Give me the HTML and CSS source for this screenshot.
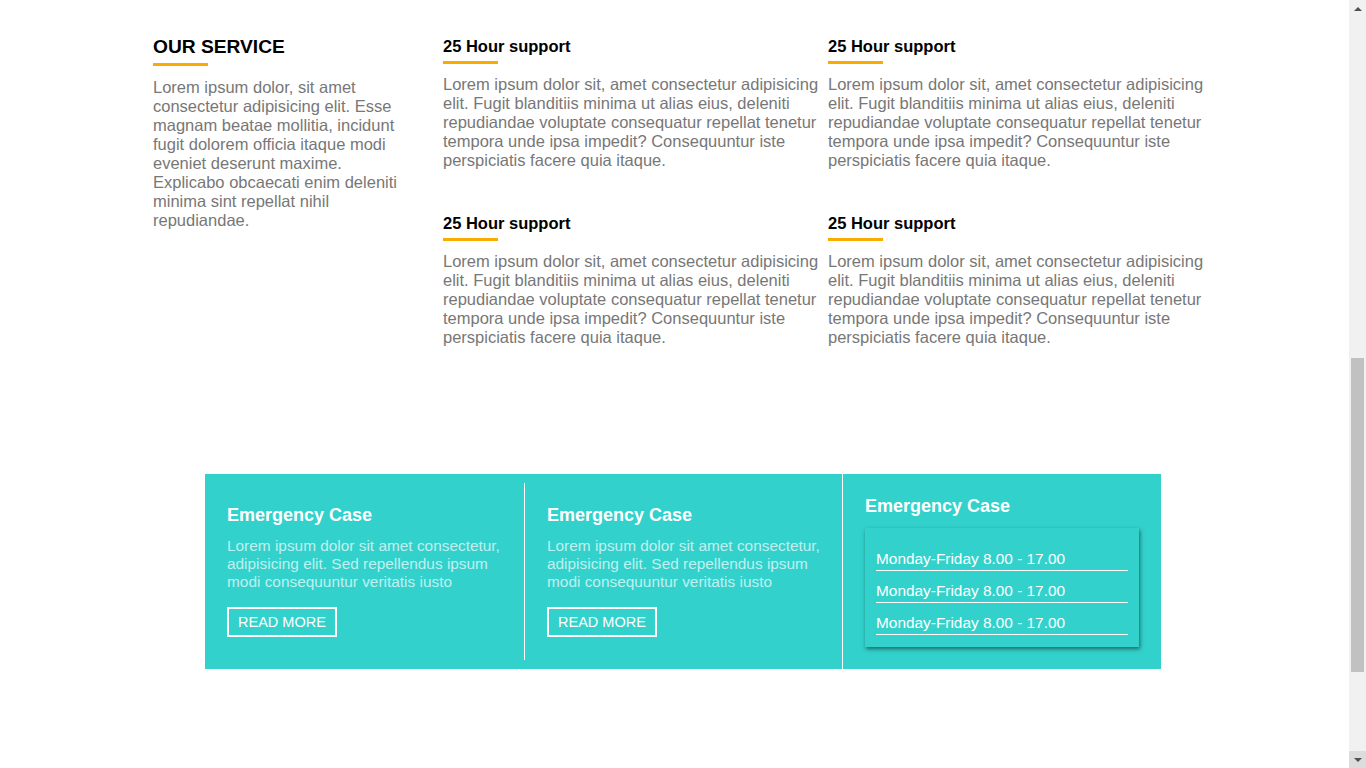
FILE: index.html
```html
<!DOCTYPE html>
<html lang="en">
<head>
<meta charset="utf-8">
<title>Our Service</title>
<link rel="stylesheet" href="styles.css">
</head>
<body>
<div class="page">
  <section class="services">
    <div class="intro">
      <h2 class="intro-title">OUR SERVICE</h2>
      <div class="bar bar-intro"></div>
      <p class="intro-text">Lorem ipsum dolor, sit amet consectetur adipisicing elit. Esse magnam beatae mollitia, incidunt fugit dolorem officia itaque modi eveniet deserunt maxime. Explicabo obcaecati enim deleniti minima sint repellat nihil repudiandae.</p>
    </div>
    <div class="service">
      <h3 class="service-title">25 Hour support</h3>
      <div class="bar"></div>
      <p class="service-text">Lorem ipsum dolor sit, amet consectetur adipisicing elit. Fugit blanditiis minima ut alias eius, deleniti repudiandae voluptate consequatur repellat tenetur tempora unde ipsa impedit? Consequuntur iste perspiciatis facere quia itaque.</p>
    </div>
    <div class="service">
      <h3 class="service-title">25 Hour support</h3>
      <div class="bar"></div>
      <p class="service-text">Lorem ipsum dolor sit, amet consectetur adipisicing elit. Fugit blanditiis minima ut alias eius, deleniti repudiandae voluptate consequatur repellat tenetur tempora unde ipsa impedit? Consequuntur iste perspiciatis facere quia itaque.</p>
    </div>
    <div class="service">
      <h3 class="service-title">25 Hour support</h3>
      <div class="bar"></div>
      <p class="service-text">Lorem ipsum dolor sit, amet consectetur adipisicing elit. Fugit blanditiis minima ut alias eius, deleniti repudiandae voluptate consequatur repellat tenetur tempora unde ipsa impedit? Consequuntur iste perspiciatis facere quia itaque.</p>
    </div>
    <div class="service">
      <h3 class="service-title">25 Hour support</h3>
      <div class="bar"></div>
      <p class="service-text">Lorem ipsum dolor sit, amet consectetur adipisicing elit. Fugit blanditiis minima ut alias eius, deleniti repudiandae voluptate consequatur repellat tenetur tempora unde ipsa impedit? Consequuntur iste perspiciatis facere quia itaque.</p>
    </div>
  </section>

  <section class="emergency">
    <div class="ec-col ec-first">
      <h4 class="ec-title">Emergency Case</h4>
      <p class="ec-text">Lorem ipsum dolor sit amet consectetur, adipisicing elit. Sed repellendus ipsum modi consequuntur veritatis iusto</p>
      <a class="ec-btn" href="#">READ MORE</a>
    </div>
    <div class="ec-col ec-second">
      <h4 class="ec-title">Emergency Case</h4>
      <p class="ec-text">Lorem ipsum dolor sit amet consectetur, adipisicing elit. Sed repellendus ipsum modi consequuntur veritatis iusto</p>
      <a class="ec-btn" href="#">READ MORE</a>
    </div>
    <div class="ec-col ec-third">
      <h4 class="ec-title">Emergency Case</h4>
      <ul class="hours">
        <li>Monday-Friday 8.00 - 17.00</li>
        <li>Monday-Friday 8.00 - 17.00</li>
        <li>Monday-Friday 8.00 - 17.00</li>
      </ul>
    </div>
  </section>
</div>

<div class="scrollbar" aria-hidden="true">
  <div class="sb-btn sb-up"><span class="sb-arrow-up"></span></div>
  <div class="sb-track"><div class="sb-thumb"></div></div>
  <div class="sb-btn sb-down"><span class="sb-arrow-down"></span></div>
</div>
</body>
</html>
```

FILE: styles.css
```css
body {
  margin: 0;
  background: #ffffff;
  font-family: "Liberation Sans", Arial, sans-serif;
}

.page {
  padding-bottom: 120px;
}

.services {
  width: 1060px;
  margin: 0 auto;
  padding-top: 36px;
  display: grid;
  grid-template-columns: 290px 385px 385px;
  row-gap: 43px;
}

.intro {
  grid-row: 1 / span 2;
  padding-right: 32px;
}

.intro-title {
  margin: 0;
  font-size: 19.2px;
  line-height: 22px;
  font-weight: bold;
  color: #000;
}

.bar {
  width: 55px;
  height: 3px;
  margin-top: 5px;
  background: #f9ab00;
}

.intro-text {
  margin: 12px 0 0;
  font-size: 16.5px;
  line-height: 19px;
  color: #777;
}

.service-title {
  margin: 0;
  font-size: 16.5px;
  line-height: 20px;
  font-weight: bold;
  color: #000;
}

.service-text {
  margin: 11px 0 0;
  font-size: 16.5px;
  line-height: 19px;
  color: #777;
}

.emergency {
  width: 956px;
  margin: 127px auto 0;
  display: flex;
  background: #33d1cc;
  color: #fff;
}

.ec-col {
  box-sizing: border-box;
  flex: none;
  padding: 22px 22px 22px;
  display: flex;
  flex-direction: column;
  align-items: flex-start;
}

.ec-first {
  width: 320px;
  margin: 9px 0;
  border-right: 1px solid #fff;
}

.ec-second {
  width: 317px;
  margin: 9px 0;
}

.ec-third {
  width: 319px;
  border-left: 1px solid #fff;
  align-items: stretch;
}

.ec-title {
  margin: 0;
  font-size: 18px;
  line-height: 21px;
  font-weight: bold;
  color: #fff;
}

.ec-text {
  margin: 11px 0 0;
  font-size: 15.4px;
  line-height: 18px;
  color: rgba(255, 255, 255, 0.7);
}

.ec-btn {
  margin-top: 16px;
  display: inline-block;
  padding: 4px 9px;
  border: 2px solid #fff;
  font-size: 14.5px;
  line-height: 18px;
  color: #fff;
  text-decoration: none;
}

.hours {
  list-style: none;
  margin: 11px 0 0;
  padding: 11px 11px 12px;
  box-shadow: 1px 2px 4px rgba(0, 0, 0, 0.5);
}

.hours li {
  padding: 11px 0 2px;
  border-bottom: 1px solid #fff;
  font-size: 15.4px;
  line-height: 18px;
  color: #fff;
}

/* decorative window scrollbar, as seen in the screenshot */
.scrollbar {
  position: fixed;
  top: 0;
  right: 0;
  width: 17px;
  height: 100vh;
  display: flex;
  flex-direction: column;
  background: #f1f1f1;
}

.sb-btn {
  height: 17px;
  flex: 0 0 17px;
  display: flex;
  align-items: center;
  justify-content: center;
}

.sb-down {
  background: #dcdcdc;
}

.sb-arrow-up {
  width: 0;
  height: 0;
  border-left: 4px solid transparent;
  border-right: 4px solid transparent;
  border-bottom: 4px solid #505050;
}

.sb-arrow-down {
  width: 0;
  height: 0;
  border-left: 4px solid transparent;
  border-right: 4px solid transparent;
  border-top: 4px solid #505050;
}

.sb-track {
  flex: 1;
  padding: 341px 2px 0;
}

.sb-thumb {
  height: 314px;
  background: #c1c1c1;
}
```
